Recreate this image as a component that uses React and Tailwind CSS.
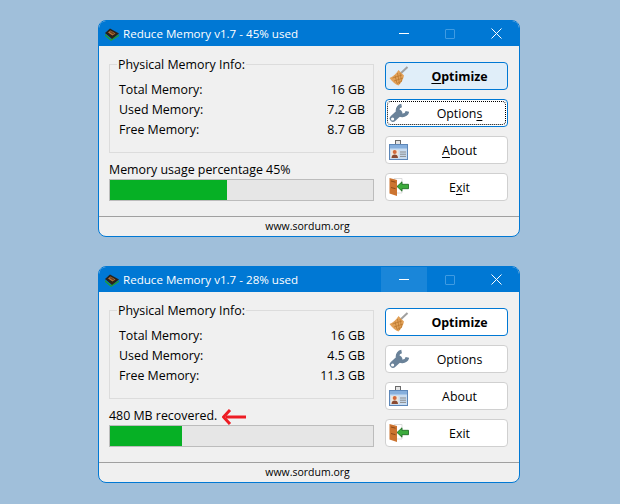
import React from 'react'

const ChipIcon = () => (
  <svg width="16" height="16" viewBox="0 0 16 16">
    <path d="M1 8 L7 13 L15 8.5 L15 10 L7 15 L1 10 Z" fill="#1f9a3a" />
    <path d="M1 7 L6 2.5 L15 7.5 L8 13 Z" fill="#2a2118" />
    <path d="M4 6.5 L6.5 4.5 L11.5 7.5 L8.5 9.5 Z" fill="#b8743a" />
    <path d="M5.5 6 L6.8 5 L10.5 7.4 L9 8.4 Z" fill="#6b4020" />
  </svg>
)

const BroomIcon = () => (
  <svg width="20" height="20" viewBox="0 0 20 20">
    <path d="M11 8 L18.5 1" stroke="#a0a0a0" strokeWidth="2" />
    <path d="M9.5 4 L15 9.5 C14.5 13 12.5 16.5 9.5 19.5 C6.5 18.5 3 15.5 0.5 12 C4 10.5 7 8 9.5 4 Z" fill="#e3a25a" />
    <path d="M8.5 7 L10.5 18 M6 9.5 L8 17.5 M11 7 L12.5 15 M3.5 12 L13 9 M5 15 L14 12 M8 17.5 L13 15" stroke="#bb7a30" strokeWidth="0.8" fill="none" />
  </svg>
)

const WrenchIcon = () => (
  <svg width="20" height="20" viewBox="0 0 20 20">
    <path d="M4 15.5 L10 10" stroke="#6a8299" strokeWidth="6.5" strokeLinecap="round" />
    <path d="M12.6 2.5 A5 5 0 1 0 18.4 8.4" stroke="#6a8299" strokeWidth="3.6" fill="none" />
    <circle cx="3.6" cy="16" r="1.6" fill="#ffffff" />
  </svg>
)

const CardIcon = () => (
  <svg width="19" height="20" viewBox="0 0 19 20">
    <rect x="6.5" y="0.5" width="5" height="5" fill="#e4e4e4" stroke="#6a6a6a" />
    <rect x="0.5" y="4.5" width="18" height="15" fill="#c9dcf0" stroke="#5c86b8" />
    <rect x="1" y="5" width="17" height="3.5" fill="#86afdd" />
    <rect x="2" y="10" width="7.5" height="8" fill="#efe6da" />
    <circle cx="5.7" cy="12" r="2" fill="#d2693a" />
    <path d="M2.5 18 C2.5 15.5 4 14.5 5.7 14.5 C7.5 14.5 9 15.5 9 18 Z" fill="#8a4a32" />
    <path d="M11 12 H17 M11 14.2 H17 M11 16.4 H17" stroke="#8c8c8c" strokeWidth="1" />
  </svg>
)

const ExitIcon = () => (
  <svg width="20" height="20" viewBox="0 0 20 20">
    <path d="M5 1.5 H13 V16 H7 Z" fill="#ffffff" stroke="#d4d4d4" strokeWidth="0.8" />
    <path d="M0.5 1 L8 3 V19 L0.5 16.5 Z" fill="#cc7430" />
    <path d="M2 4 L6.5 5.2 M2 10.5 L6.5 11.7" stroke="#8c4a19" strokeWidth="1" />
    <path d="M8 9.5 L13 4.8 V7.3 H19.5 V11.7 H13 V14.2 Z" fill="#3cab3c" stroke="#17651c" strokeWidth="0.8" />
  </svg>
)

const RedArrow = () => (
  <svg width="24" height="16" viewBox="0 0 24 16">
    <path d="M24 8 H4" stroke="#ed1c24" strokeWidth="3" fill="none" />
    <path d="M8 1 L1.5 8 L8 15" stroke="#ed1c24" strokeWidth="3" fill="none" />
  </svg>
)

const Key = ({ children }) => <span className="underline underline-offset-2">{children}</span>

const InfoRow = ({ label, value }) => (
  <div className="flex justify-between h-5 items-center leading-none">
    <span>{label}</span>
    <span>{value}</span>
  </div>
)

const ActionButton = ({ icon, children, variant, bold }) => {
  let look = 'border-[#d0d0d0] bg-white'
  if (variant === 'hot') look = 'border-[#0078d4] bg-[#e0eef9]'
  if (variant === 'default' || variant === 'focus') look = 'border-[#0078d4] bg-white'
  return (
    <button className={`relative flex items-center h-7 w-[123px] rounded border pl-[3px] ${look} ${bold ? 'font-bold' : ''}`}>
      {variant === 'focus' && <span className="absolute inset-[1px] border border-dotted border-black rounded-sm" />}
      <span className="w-6 h-6 shrink-0 flex items-center justify-start">{icon}</span>
      <span className="flex-1 text-center pr-px pt-[3px] text-[#000]">{children}</span>
    </button>
  )
}

const Window = ({ title, total, used, free, status, percent, arrow, hoverMin, keys, buttonStates }) => (
  <div className="w-[422px] h-[217px] flex flex-col rounded-lg border border-[#0078d4] bg-[#f0f0f0] overflow-hidden">
    <div className="h-[25px] shrink-0 flex items-center bg-[#0078d4] text-white">
      <span className="ml-[5px] w-4 h-4 shrink-0"><ChipIcon /></span>
      <span className="ml-[3px] flex-1 text-[11.6px]">{title}</span>
      <div className="flex h-full">
        <div className={`w-[46px] flex items-center justify-center ${hoverMin ? 'bg-[#1a86d9]' : ''}`}>
          <span className="block w-[10px] h-px bg-white" />
        </div>
        <div className="w-[46px] flex items-center justify-center">
          <span className="block w-[10px] h-[10px] rounded-[1px] border border-[#3f9be2]" />
        </div>
        <div className="w-[46px] flex items-center justify-center">
          <svg width="11" height="11" viewBox="0 0 11 11">
            <path d="M0.5 0.5 L10.5 10.5 M10.5 0.5 L0.5 10.5" stroke="#ffffff" strokeWidth="1" />
          </svg>
        </div>
      </div>
    </div>
    <div className="flex-1 flex pl-[10px] pt-[16px] gap-[11px]">
      <div className="w-[265px] flex flex-col">
        <fieldset className="h-[96px] -mt-[5px] border border-[#dcdcdc] pl-[8px] pr-[8px]">
          <legend className="-ml-px px-[1px] pt-px leading-[14px]">Physical Memory Info:</legend>
          <div className="pt-[8px] pl-px">
            <InfoRow label="Total Memory:" value={total} />
            <InfoRow label="Used Memory:" value={used} />
            <InfoRow label="Free Memory:" value={free} />
          </div>
        </fieldset>
        <div className="h-[17px] mt-[9px] flex items-center gap-[5px] leading-none">
          <span>{status}</span>
          {arrow && <RedArrow />}
        </div>
        <div className="h-[22px] border border-[#bcbcbc] bg-[#e6e6e6]">
          <div className="h-full bg-[#06b025]" style={{ width: percent + '%' }} />
        </div>
      </div>
      <div className="flex flex-col gap-[9px]">
        <ActionButton icon={<BroomIcon />} variant={buttonStates.optimize} bold>
          {keys ? <><Key>O</Key>ptimize</> : 'Optimize'}
        </ActionButton>
        <ActionButton icon={<WrenchIcon />} variant={buttonStates.options}>
          {keys ? <>Option<Key>s</Key></> : 'Options'}
        </ActionButton>
        <ActionButton icon={<CardIcon />}>
          {keys ? <><Key>A</Key>bout</> : 'About'}
        </ActionButton>
        <ActionButton icon={<ExitIcon />}>
          {keys ? <>E<Key>x</Key>it</> : 'Exit'}
        </ActionButton>
      </div>
    </div>
    <div className="h-5 shrink-0 border-t border-[#a0a0a0] flex items-center justify-center pr-[3px] text-[10.5px]">
      www.sordum.org
    </div>
  </div>
)

export default function App() {
  return (
    <div className="w-[620px] h-[504px] bg-[#a0bfda] flex flex-col items-start pt-5 pl-[98px] gap-[29px] text-[12.4px] text-black font-['Open_Sans','Noto_Sans',sans-serif]">
      <Window
        title="Reduce Memory v1.7 - 45% used"
        total="16 GB"
        used="7.2 GB"
        free="8.7 GB"
        status="Memory usage percentage 45%"
        percent={44.5}
        keys
        buttonStates={{ optimize: 'hot', options: 'focus' }}
      />
      <Window
        title="Reduce Memory v1.7 - 28% used"
        total="16 GB"
        used="4.5 GB"
        free="11.3 GB"
        status="480 MB recovered."
        percent={27.4}
        arrow
        hoverMin
        buttonStates={{ optimize: 'default' }}
      />
    </div>
  )
}
